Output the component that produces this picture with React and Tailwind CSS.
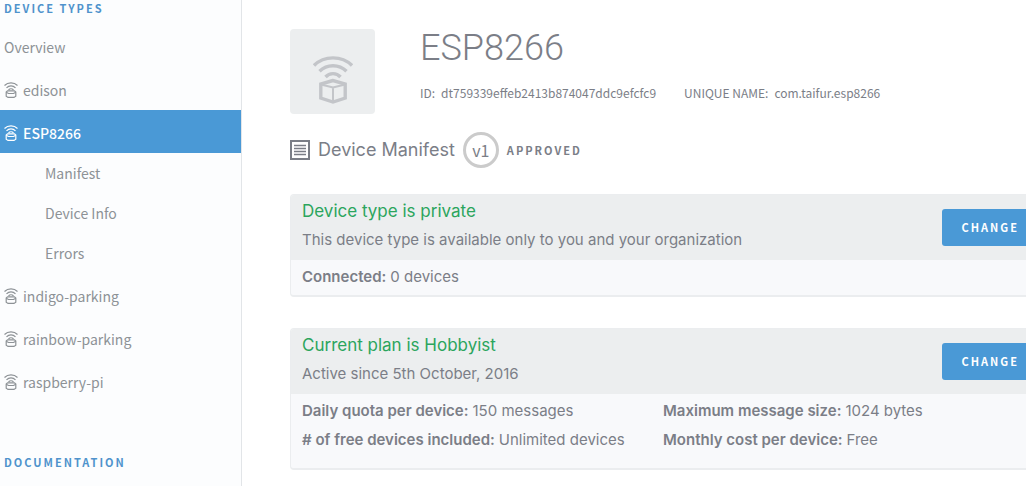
const sans = "font-['Noto_Sans_CJK_SC','Noto_Sans',sans-serif]";

const deviceTypes = [
  { name: "edison" },
  {
    name: "ESP8266",
    active: true,
    children: ["Manifest", "Device Info", "Errors"],
  },
  { name: "indigo-parking" },
  { name: "rainbow-parking" },
  { name: "raspberry-pi" },
];

const panels = [
  {
    title: "Device type is private",
    subtitle: "This device type is available only to you and your organization",
    rows: [[{ label: "Connected:", value: "0 devices" }]],
  },
  {
    title: "Current plan is Hobbyist",
    subtitle: "Active since 5th October, 2016",
    roomy: true,
    rows: [
      [
        { label: "Daily quota per device:", value: "150 messages" },
        { label: "Maximum message size:", value: "1024 bytes" },
      ],
      [
        { label: "# of free devices included:", value: "Unlimited devices" },
        { label: "Monthly cost per device:", value: "Free" },
      ],
    ],
  },
];

function DeviceIcon({ className }) {
  return (
    <svg
      viewBox="0 0 40 48"
      fill="none"
      stroke="currentColor"
      strokeWidth="3.4"
      className={className}
      aria-hidden="true"
    >
      <path d="M1 9.500C11-.7 29-.7 39 9.500" />
      <path d="M6.500 15.300C14 7.900 26 7.900 33.500 15.300" />
      <path d="M12.500 21C16.500 16.500 23.500 16.500 27.500 21" />
      <path d="M20 24.500 7.800 28V42L20 46 32.200 42V28Z" />
      <path d="M8 28.500 20 31.500 32 28.500M20 31.500V46" strokeWidth="2" />
    </svg>
  );
}

function SmallDeviceIcon() {
  return (
    <svg
      viewBox="0 0 14 16"
      fill="none"
      stroke="currentColor"
      strokeWidth="1.2"
      className="h-4 w-3.5 shrink-0"
      aria-hidden="true"
    >
      <path d="M.5 3.500C4 .1 10 .1 13.500 3.500" />
      <path d="M2.500 5.800C5 3.200 9 3.200 11.500 5.800" />
      <path d="M4.500 8C6 6.300 8 6.300 9.500 8" />
      <path d="M3.500 8.800H10.500L11.800 10V14.200L10 15.400H4L2.200 14.200V10Z" />
      <path d="M2.200 10.200 4.500 11.500H9.500L11.800 10.200" />
    </svg>
  );
}

function ManifestIcon() {
  return (
    <svg
      viewBox="0 0 20 20"
      fill="none"
      stroke="currentColor"
      className="size-5 shrink-0"
      aria-hidden="true"
    >
      <rect x="1" y="1" width="18" height="18" strokeWidth="2" />
      <path d="M4 5.500H16M4 8.500H16M4 11.500H16M4 14.500H16" strokeWidth="1.500" />
    </svg>
  );
}

function Sidebar() {
  return (
    <aside
      className={`w-[242px] shrink-0 border-r border-[#e2e5e8] bg-[#fcfdfe] text-sm leading-5 text-[#8d9296] ${sans}`}
    >
      <h2 className="h-6 px-1 text-[11px] leading-4 font-bold tracking-[2px] text-[#4f93cc]">
        DEVICE TYPES
      </h2>

      <nav aria-label="Device types">
        <a href="#overview" className="flex h-[43px] items-center px-1 pt-0.5">
          Overview
        </a>

        <ul>
          {deviceTypes.map((item) => (
            <li key={item.name}>
              <a
                href={`#${item.name}`}
                className={
                  item.active
                    ? "flex h-[43px] items-center gap-[5px] bg-[#4a99d6] px-1 pt-0.5 font-medium text-white"
                    : "flex h-[43px] items-center gap-[5px] px-1 pt-0.5"
                }
              >
                <SmallDeviceIcon />
                {item.name}
              </a>

              {item.children ? (
                <ul>
                  {item.children.map((child) => (
                    <li key={child}>
                      <a
                        href={`#${child}`}
                        className="flex h-10 items-center pl-[45px]"
                      >
                        {child}
                      </a>
                    </li>
                  ))}
                </ul>
              ) : null}
            </li>
          ))}
        </ul>
      </nav>

      <h2 className="mt-[52px] px-1 text-[11px] leading-4 font-bold tracking-[2px] text-[#4f93cc]">
        DOCUMENTATION
      </h2>
    </aside>
  );
}

function Panel({ title, subtitle, rows, roomy }) {
  return (
    <section className="overflow-hidden rounded-sm border border-b-2 border-[#ebedef] bg-[#f8f9fb]">
      <header className="flex h-[65px] items-center justify-between bg-[#eceeef] pr-3 pl-[11px]">
        <div className="pb-1">
          <h3 className="text-[17px] leading-7 text-[#2ba55d]">{title}</h3>
          <p className="leading-[29px]">{subtitle}</p>
        </div>

        <button
          type="button"
          className={`h-[37px] rounded-[3px] bg-[#4a99d6] px-5 text-[11px] font-bold tracking-[2px] text-white ${sans}`}
        >
          CHANGE
        </button>
      </header>

      <div className={roomy ? "pt-0.5 pr-3 pb-3.5 pl-[11px]" : "pt-0.5 pr-3 pb-1 pl-[11px]"}>
        {rows.map((row) => (
          <dl key={row[0].label} className="flex leading-[29px]">
            {row.map((cell) => (
              <div key={cell.label} className="flex w-[361px] gap-1 whitespace-nowrap">
                <dt className="font-semibold">{cell.label}</dt>
                <dd>{cell.value}</dd>
              </div>
            ))}
          </dl>
        ))}
      </div>
    </section>
  );
}

export default function App() {
  return (
    <div className="min-h-screen overflow-hidden bg-white">
      <div className="flex min-h-screen min-w-[1100px]">
        <Sidebar />

        <main className="min-w-0 flex-1 pt-[29px] pr-12 pl-12 font-[Inter,sans-serif] text-[15px] text-[#7b7e87]">
          <div className="flex gap-[45px]">
            <div className="flex size-[85px] shrink-0 items-end justify-center rounded-sm bg-[#eceeef] pb-2.5 text-[#c3c5c9]">
              <DeviceIcon className="h-12 w-10" />
            </div>

            <div>
              <h1 className="font-[Roboto,sans-serif] text-4xl leading-[38px] font-light">
                ESP8266
              </h1>
              <dl className={`mt-4 flex gap-7 text-xs leading-5 ${sans}`}>
                <div className="flex gap-1.5">
                  <dt>ID:</dt>
                  <dd>dt759339effeb2413b874047ddc9efcfc9</dd>
                </div>
                <div className="flex gap-1.5">
                  <dt>UNIQUE NAME:</dt>
                  <dd>com.taifur.esp8266</dd>
                </div>
              </dl>
            </div>
          </div>

          <div className="mt-[18px] mb-[26px] flex items-center gap-2">
            <ManifestIcon />
            <h2 className="text-lg leading-6">Device Manifest</h2>
            <span
              className={`flex size-9 items-center justify-center rounded-full border-[3px] border-[#cbcbcb] text-base ${sans}`}
            >
              v1
            </span>
            <span className={`text-[11px] font-bold tracking-[2px] ${sans}`}>
              APPROVED
            </span>
          </div>

          <div className="flex flex-col gap-[31px]">
            {panels.map((panel) => (
              <Panel key={panel.title} {...panel} />
            ))}
          </div>
        </main>
      </div>
    </div>
  );
}
